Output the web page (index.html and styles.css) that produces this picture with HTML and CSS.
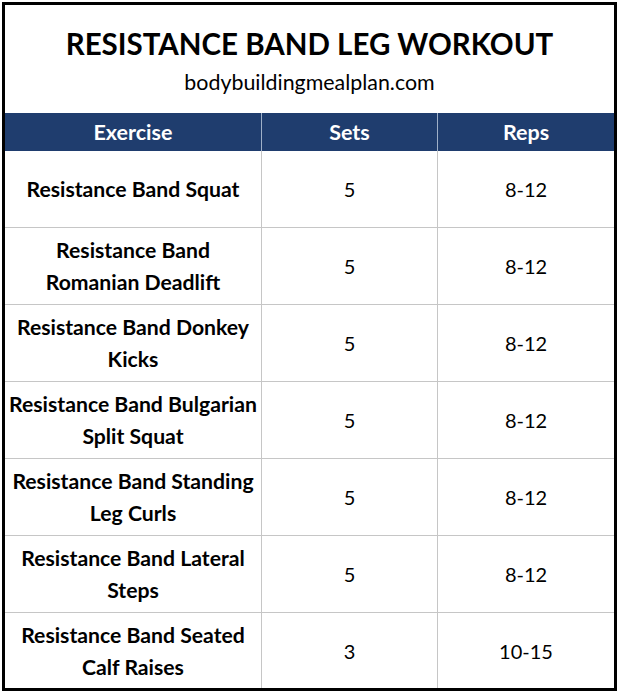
FILE: index.html
```html
<!DOCTYPE html>
<html>
<head>
<meta charset="utf-8">
<link rel="stylesheet" href="styles.css">
</head>
<body>
<div class="sheet">
  <div class="title-area">
    <h1 class="title">RESISTANCE BAND LEG WORKOUT</h1>
    <div class="subtitle">bodybuildingmealplan.com</div>
  </div>
  <div class="table">
    <div class="th c1">Exercise</div>
    <div class="th c2">Sets</div>
    <div class="th c3">Reps</div>

    <div class="td c1 name">Resistance Band Squat</div>
    <div class="td c2">5</div>
    <div class="td c3">8-12</div>

    <div class="td c1 name">Resistance Band<br>Romanian Deadlift</div>
    <div class="td c2">5</div>
    <div class="td c3">8-12</div>

    <div class="td c1 name">Resistance Band Donkey<br>Kicks</div>
    <div class="td c2">5</div>
    <div class="td c3">8-12</div>

    <div class="td c1 name">Resistance Band Bulgarian<br>Split Squat</div>
    <div class="td c2">5</div>
    <div class="td c3">8-12</div>

    <div class="td c1 name">Resistance Band Standing<br>Leg Curls</div>
    <div class="td c2">5</div>
    <div class="td c3">8-12</div>

    <div class="td c1 name">Resistance Band Lateral<br>Steps</div>
    <div class="td c2">5</div>
    <div class="td c3">8-12</div>

    <div class="td c1 name last">Resistance Band Seated<br>Calf Raises</div>
    <div class="td c2 last">3</div>
    <div class="td c3 last">10-15</div>
  </div>
</div>
</body>
</html>
```
FILE: styles.css
```css
html, body {
  margin: 0;
  padding: 0;
  background: #ffffff;
}

body {
  padding: 2px 0 0 2px;
  font-family: Lato, "Open Sans", sans-serif;
  color: #000;
}

.sheet {
  width: 609px;
  height: 683px;
  border: 3px solid #000;
  overflow: hidden;
  background: #fff;
}

.title-area {
  height: 108px;
  display: flex;
  flex-direction: column;
  align-items: center;
}

.title {
  margin: 21px 0 0 0;
  font-size: 29.5px;
  font-weight: 700;
  line-height: 36px;
  letter-spacing: 0;
  white-space: nowrap;
}

.subtitle {
  margin-top: 8px;
  font-size: 21.4px;
  line-height: 24px;
  white-space: nowrap;
}

.table {
  display: grid;
  grid-template-columns: 257px 176px 176px;
  grid-template-rows: 38px repeat(6, 77px) 1fr;
  height: 575px;
}

.th {
  background: #1f3d6e;
  color: #fff;
  font-weight: 700;
  font-size: 21.5px;
  display: flex;
  align-items: center;
  justify-content: center;
}

.th.c1, .th.c2 {
  border-right: 1px solid #9fb0c8;
}

.td {
  display: flex;
  align-items: center;
  justify-content: center;
  text-align: center;
  font-size: 20px;
  border-bottom: 1px solid #c6c6c6;
}

.td.c1, .td.c2 {
  border-right: 1px solid #c6c6c6;
}

.td.last {
  border-bottom: none;
}

.name {
  font-size: 21.2px;
  font-weight: 700;
  line-height: 32px;
  white-space: nowrap;
}
```
